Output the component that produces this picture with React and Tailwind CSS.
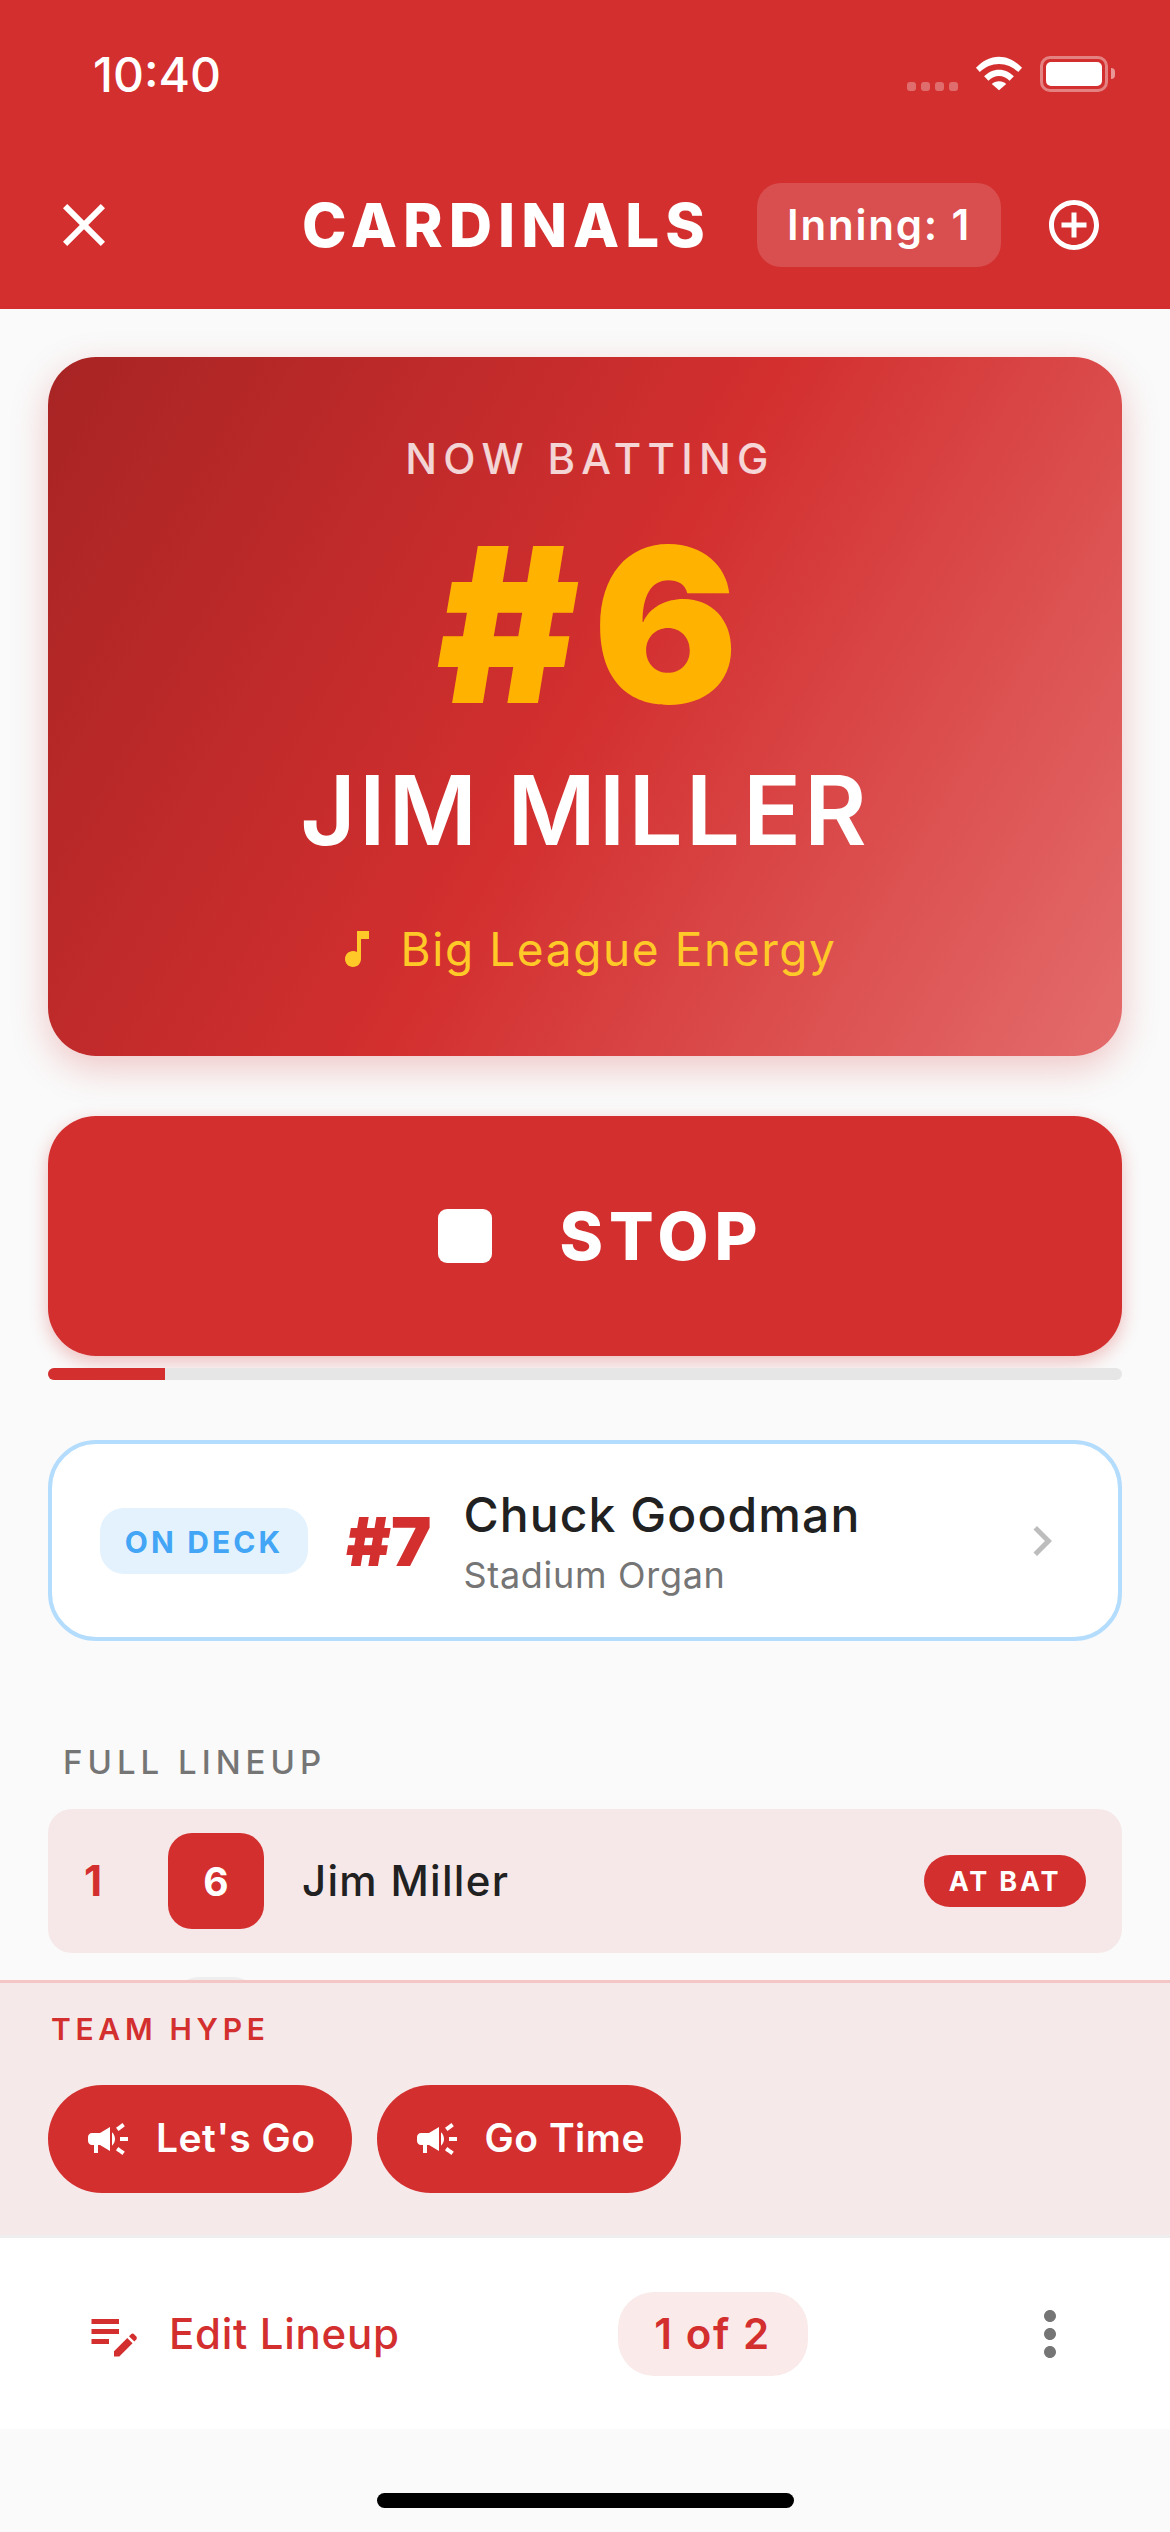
import React from "react";
import {
  MdCampaign,
  MdChevronRight,
  MdClose,
  MdEditNote,
  MdMoreVert,
  MdMusicNote,
  MdOutlineAddCircleOutline,
} from "react-icons/md";

const inter = { fontFamily: "Inter, 'Noto Sans', sans-serif" };

const StatusBar = () => (
  <div className="flex h-[148px] items-start justify-between pl-[93px] pr-[55px]">
    <span className="mt-[48px] text-[48px] font-medium leading-[54px] text-white">10:40</span>
    <div className="mt-[55px] flex items-start">
      {/* signal dots */}
      <div className="mt-[27px] flex gap-[5px]">
        <div className="h-[9px] w-[9px] rounded-[3px] bg-white/30" />
        <div className="h-[9px] w-[9px] rounded-[3px] bg-white/30" />
        <div className="h-[9px] w-[9px] rounded-[3px] bg-white/30" />
        <div className="h-[9px] w-[9px] rounded-[3px] bg-white/30" />
      </div>
      <svg className="ml-[17px]" width="48" height="36" viewBox="0 0 50 36">
        <path fill="#fff" d="M1 12.500C7.500 5.500 16 1 25 1s17.500 4.500 24 11.500L45 17C39.500 11.500 32.500 8.500 25 8.500S10.500 11.500 5 17z" />
        <path fill="#fff" d="M9.500 21.500C13.500 17.300 19 14.500 25 14.500s11.500 2.800 15.500 7L36 26C33 23 29 21 25 21s-8 2-11 5z" />
        <path fill="#fff" d="M17.500 29.500C19.500 27.500 22 26.500 25 26.500s5.500 1 7.500 3L25 36z" />
      </svg>
      <div className="ml-[17px] mt-[1px] h-[36px] w-[68px] rounded-[10px] border-[3px] border-white/40 p-[3px]">
        <div className="h-full w-full rounded-[5px] bg-white" />
      </div>
      <div className="ml-[3px] mt-[13px] h-[11px] w-[4px] rounded-r-full bg-white/50" />
    </div>
  </div>
);

const TopBar = () => (
  <div className="flex h-[161px] items-start pr-[66px]">
    <MdClose className="ml-[48px] mt-[41px] text-white" size={72} />
    <span className="ml-[182px] mt-[45px] text-[60px] font-extrabold leading-[64px] tracking-[6px] text-white">
      CARDINALS
    </span>
    <div className="ml-auto mt-[35px] flex h-[84px] w-[244px] items-center justify-center rounded-[24px] bg-white/15">
      <span className="text-[42px] font-semibold leading-none tracking-[1.8px] text-white">Inning: 1</span>
    </div>
    <MdOutlineAddCircleOutline className="ml-[43px] mt-[47px] text-white" size={60} />
  </div>
);

const NowBatting = () => (
  <div className="flex h-[699px] flex-col items-center rounded-[48px] bg-[linear-gradient(120deg,#a82424_0%,#d32f2f_50%,#e46c6c_100%)] shadow-[0_12px_36px_rgba(211,47,47,0.25)]">
    <span className="mt-[78px] pl-[10px] text-[42px] font-medium leading-[48px] tracking-[6.3px] text-white/80">NOW BATTING</span>
    <span className="mt-[42px] pl-[18px] text-[216px] font-black leading-[200px] tracking-[13px] text-[#ffb300]">#6</span>
    <span className="mt-[29px] text-[96px] font-semibold leading-[112px] tracking-[3px] text-white">JIM MILLER</span>
    <div className="mt-[55px] flex items-center">
      <MdMusicNote className="text-[#ffca28]" size={48} />
      <span className="ml-[19px] text-[46px] font-normal leading-[56px] tracking-[1.6px] text-[#ffca28]">Big League Energy</span>
    </div>
  </div>
);

const StopButton = () => (
  <div className="mt-[60px] flex h-[240px] items-center justify-center rounded-[48px] bg-[#d32f2f] pl-[32px] shadow-[0_6px_18px_rgba(211,47,47,0.3)]">
    <div className="h-[54px] w-[54px] rounded-[9px] bg-white" />
    <span className="ml-[67px] text-[66px] font-extrabold leading-none tracking-[6px] text-white">STOP</span>
  </div>
);

const OnDeck = () => (
  <div className="mt-[60px] flex h-[201px] items-center rounded-[48px] border-[4px] border-[#b3dcfd] bg-white pl-[48px] pr-[48px]">
    <div className="flex h-[66px] w-[208px] items-center justify-center rounded-[24px] bg-[#e3f2fd] pt-[2px]">
      <span className="text-[30px] font-bold leading-none tracking-[3.1px] text-[#42a5f5]">ON DECK</span>
    </div>
    <span className="ml-[38px] text-[68px] font-black leading-none text-[#d32f2f]">#7</span>
    <div className="ml-[32px] flex flex-col">
      <span className="text-[48px] font-medium leading-[60px] tracking-[1.1px] text-[#212121]">Chuck Goodman</span>
      <span className="mt-[8px] text-[36px] font-normal leading-[44px] tracking-[0.7px] text-[#757575]">Stadium Organ</span>
    </div>
    <MdChevronRight className="ml-auto mr-[-2px] text-[#bdbdbd]" size={60} />
  </div>
);

const LineupRow = () => (
  <div className="mt-[27px] flex h-[144px] shrink-0 items-center rounded-[24px] bg-[#f6e8e8] pl-[36px] pr-[36px]">
    <span className="w-[84px] text-[42px] font-bold leading-none text-[#d32f2f]">1</span>
    <div className="flex h-[96px] w-[96px] items-center justify-center rounded-[24px] bg-[#d32f2f]">
      <span className="text-[39px] font-bold leading-none text-white">6</span>
    </div>
    <span className="ml-[38px] text-[42px] font-medium leading-none tracking-[1.3px] text-[#212121]">Jim Miller</span>
    <div className="ml-auto flex h-[52px] w-[162px] items-center justify-center rounded-full bg-[#d32f2f]">
      <span className="text-[27px] font-bold leading-none tracking-[2.8px] text-white">AT BAT</span>
    </div>
  </div>
);

const HypeButton = ({ label }) => (
  <div className="flex h-[108px] items-center rounded-full bg-[#d32f2f] px-[36px]">
    <MdCampaign className="text-white" size={48} />
    <span className="mb-[4px] ml-[24px] text-[39px] font-semibold leading-none tracking-[0.5px] text-white">{label}</span>
  </div>
);

const App = () => (
  <div className="flex h-[2532px] w-[1170px] flex-col overflow-hidden bg-[#fafafa]" style={inter}>
    <header className="bg-[#d32f2f]">
      <StatusBar />
      <TopBar />
    </header>

    <main className="min-h-0 flex-1 overflow-hidden px-[48px] pt-[48px]">
      <NowBatting />
      <StopButton />
      <div className="mt-[12px] h-[12px] overflow-hidden rounded-full bg-[#e6e6e6]">
        <div className="h-full w-[117px] bg-[#d32f2f]" />
      </div>
      <OnDeck />
      <div className="ml-[15px] mt-[101px] text-[33px] font-medium leading-[40px] tracking-[5px] text-[#757575]">FULL LINEUP</div>
      <LineupRow />
      <div className="ml-[127px] mt-[24px] h-[80px] w-[82px] rounded-[24px] bg-[#eeeeee]" />
    </main>

    <section className="h-[255px] shrink-0 border-t-[3px] border-[#f5c6c6] bg-[#f6e9e9] px-[48px]">
      <div className="ml-[3px] mt-[26px] text-[30px] font-semibold leading-[40px] tracking-[4.7px] text-[#d32f2f]">TEAM HYPE</div>
      <div className="mt-[36px] flex gap-[25px]">
        <HypeButton label="Let's Go" />
        <HypeButton label="Go Time" />
      </div>
    </section>

    <nav className="flex h-[194px] shrink-0 items-center border-t-[3px] border-[#eeeeee] bg-white pl-[84px] pr-[84px]">
      <MdEditNote className="text-[#d32f2f]" size={60} />
      <span className="ml-[25px] text-[42px] font-medium leading-none tracking-[0.7px] text-[#d32f2f]">Edit Lineup</span>
      <div className="ml-[218px] flex h-[84px] w-[190px] items-center justify-center rounded-[36px] bg-[#faeaea]">
        <span className="text-[42px] font-semibold leading-none tracking-[1.6px] text-[#d32f2f]">1 of 2</span>
      </div>
      <MdMoreVert className="ml-auto text-[#757575]" size={72} />
    </nav>

    <div className="flex h-[103px] shrink-0 justify-center pt-[64px]">
      <div className="h-[15px] w-[417px] rounded-full bg-black" />
    </div>
  </div>
);

export default App;
